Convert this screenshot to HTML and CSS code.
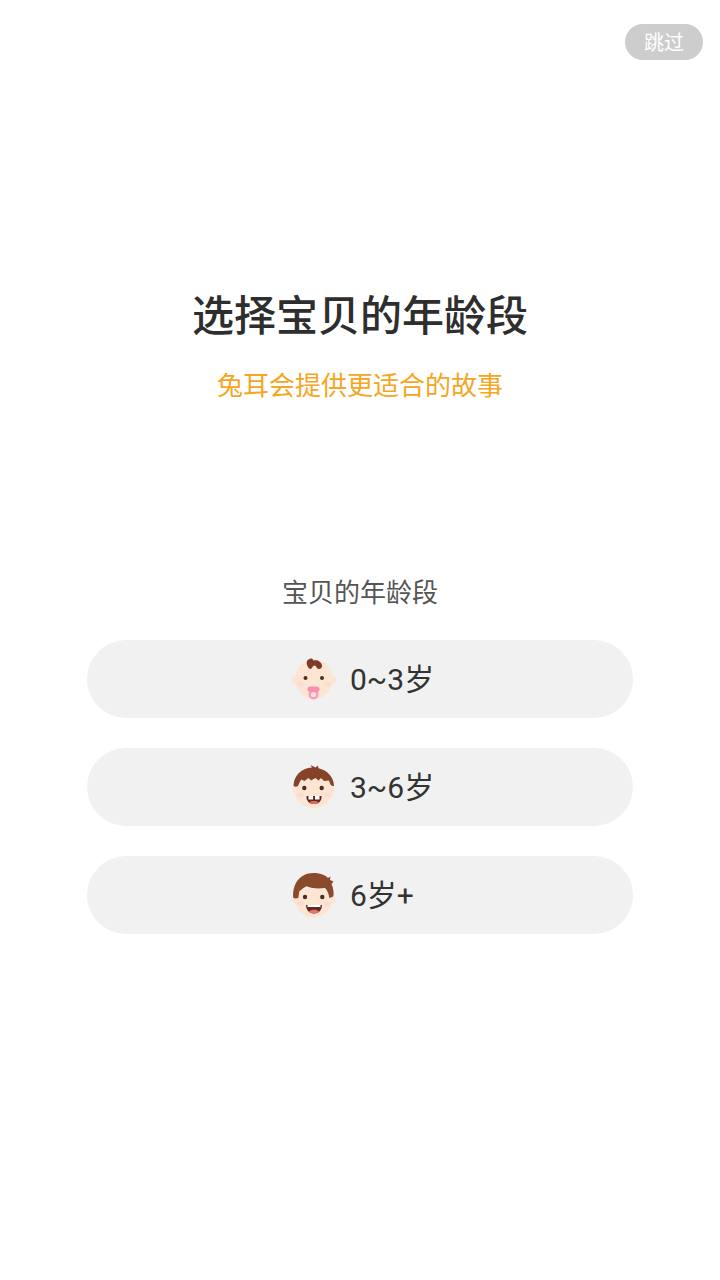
FILE: index.html
```html
<!DOCTYPE html>
<html lang="zh-CN">
<head>
  <meta charset="UTF-8">
  <meta name="viewport" content="width=device-width, initial-scale=1.0">
  <title>选择宝贝的年龄段</title>
  <link rel="stylesheet" href="styles.css">
</head>
<body>
  <div class="top-bar">
    <button class="skip-btn" type="button">跳过</button>
  </div>

  <div class="heading">
    <h1>选择宝贝的年龄段</h1>
    <p>兔耳会提供更适合的故事</p>
  </div>

  <div class="age-section">
    <div class="age-label">宝贝的年龄段</div>

    <button class="age-btn" type="button">
      <svg class="face" viewBox="0 0 44 44">
        <circle cx="4" cy="23" r="4" fill="#fde3d0"/>
        <circle cx="40" cy="23" r="4" fill="#fde3d0"/>
        <ellipse cx="22" cy="22" rx="18.5" ry="20" fill="#fde5d4"/>
        <path d="M16 10C13.500 6 15 2 18 2C19.500 1 21 1.500 21 3.500C25 2.500 29.500 4.500 30 8.500C30.300 11.500 27.500 13 25.500 11.500C24 10 24 8.500 22.500 8.500C20.500 8.500 20.500 11.500 18.500 12C17.500 12 16.500 11 16 10Z" fill="#7d3a26"/>
        <circle cx="13.500" cy="21" r="2" fill="#4f2c22"/>
        <circle cx="30" cy="21" r="2" fill="#4f2c22"/>
        <ellipse cx="8.500" cy="27" rx="3.500" ry="2.500" fill="#fddcc9"/>
        <ellipse cx="35.500" cy="27" rx="3.500" ry="2.500" fill="#fddcc9"/>
        <circle cx="21.500" cy="37.500" r="3.800" fill="#fde5d4" stroke="#f79dba" stroke-width="2.400"/>
        <rect x="15.500" y="29.500" width="12" height="5.500" rx="2.700" fill="#f78fb0"/>
      </svg>
      <span class="age-text">0~3岁</span>
    </button>

    <button class="age-btn" type="button">
      <svg class="face" viewBox="0 0 44 44">
        <circle cx="4" cy="25" r="3.500" fill="#fde3d0"/>
        <circle cx="39.500" cy="25" r="3.500" fill="#fde3d0"/>
        <circle cx="21.700" cy="23" r="20" fill="#fde5d4"/>
        <path d="M1.500 21C1.500 11 9 3 20 2.500L18.500 0L23.500 2.500L26 0.500L26.500 3.300C35 5 42 12.500 42 21C40 21.500 38.500 20.500 37 15.500L32 16L29 13L26.500 15.500L23.500 13L19 15.500L16.500 13L12.500 16L9.500 14.500C8 16 7 18.500 6 21C4.500 22 3 22 1.500 21Z" fill="#85432a"/>
        <circle cx="12.300" cy="23" r="2.200" fill="#4f2c22"/>
        <circle cx="29.700" cy="23" r="2.200" fill="#4f2c22"/>
        <ellipse cx="8" cy="30" rx="3.500" ry="2.500" fill="#fddcc9"/>
        <ellipse cx="35.500" cy="30" rx="3.500" ry="2.500" fill="#fddcc9"/>
        <path d="M14.500 31H29.500C30 35.500 27 39 22 39C17 39 14 35.500 14.500 31Z" fill="#5d2a24"/>
        <path d="M16.500 31H21V34.500H16.500ZM23 31H27.500V34.500H23Z" fill="#fff"/>
        <path d="M17.500 37C19 35.500 25 35.500 26.500 37C25.500 38.500 24 39 22 39C20 39 18.500 38.500 17.500 37Z" fill="#e8675f"/>
      </svg>
      <span class="age-text">3~6岁</span>
    </button>

    <button class="age-btn" type="button">
      <svg class="face" viewBox="0 0 44 44">
        <circle cx="4" cy="27" r="3.500" fill="#fde3d0"/>
        <circle cx="40" cy="27" r="3.500" fill="#fde3d0"/>
        <path d="M3.500 16H40V26C40 36.500 32 45 21.700 45C11.500 45 3.500 36.500 3.500 26Z" fill="#fde5d4"/>
        <path d="M1.300 25C0 11 8 0 21.300 0C27 0 33 1.500 36 5L38.500 3.500L38 7L41.500 8.500L39.500 11C41.500 15 42 20 41.300 23.500L37.300 25C37 21 35 17 33 15C26 16 20 15.500 14.700 13.300C12 14.500 9.500 16.500 7.300 18.300L6.300 25C4.500 25.500 3 25.500 1.300 25Z" fill="#8a4a2c"/>
        <circle cx="13" cy="24" r="2.200" fill="#4f2c22"/>
        <circle cx="30.300" cy="24" r="2.200" fill="#4f2c22"/>
        <ellipse cx="8.500" cy="31" rx="3.500" ry="2.500" fill="#fddcc9"/>
        <ellipse cx="35" cy="31" rx="3.500" ry="2.500" fill="#fddcc9"/>
        <path d="M14 32H30C30 37 26.500 40.500 22 40.500C17.500 40.500 14 37 14 32Z" fill="#5d2a24"/>
        <path d="M15.500 32H28.500V34H15.500Z" fill="#fff"/>
        <path d="M17 38.500C19 36 25 36 27 38.500C25.500 40 24 40.500 22 40.500C20 40.500 18.500 40 17 38.500Z" fill="#f0706a"/>
      </svg>
      <span class="age-text">6岁+</span>
    </button>
  </div>
</body>
</html>
```

FILE: styles.css
```css
/* General Styles */
html, body {
  height: 100%;
}

body {
  margin: 0;
  padding: 0;
  background-color: #fff;
  color: #333;
  font-family: "Roboto", "Noto Sans CJK SC", sans-serif;
  overflow: hidden;
}

button {
  border: none;
  font-family: inherit;
  padding: 0;
}

/* Top Bar */
.top-bar {
  display: flex;
  justify-content: flex-end;
  padding: 24px 17px 0 0;
}

.skip-btn {
  width: 78px;
  height: 36px;
  padding-bottom: 2px;
  border-radius: 18px;
  background-color: #cdcdcd;
  color: #fff;
  font-size: 20px;
}

/* Heading */
.heading {
  margin-top: 229px;
  text-align: center;
}

.heading h1 {
  margin: 0;
  font-size: 42px;
  line-height: 56px;
  font-weight: 500;
  color: #2e2e2e;
}

.heading p {
  margin: 23px 0 0;
  font-size: 26px;
  line-height: 36px;
  color: #f5a623;
}

/* Age Buttons */
.age-section {
  display: flex;
  flex-direction: column;
  align-items: center;
  gap: 30px;
  margin-top: 171px;
}

.age-label {
  margin-bottom: -1px;
  font-size: 26px;
  line-height: 36px;
  color: #555;
}

.age-btn {
  display: flex;
  align-items: center;
  gap: 14px;
  width: 546px;
  height: 78px;
  padding-left: 205px;
  border-radius: 39px;
  background-color: #f1f1f1;
  color: #333;
  font-size: 30px;
}

.age-text {
  padding-bottom: 4px;
}

.face {
  width: 44px;
  height: 44px;
  flex-shrink: 0;
  overflow: visible;
}
```
